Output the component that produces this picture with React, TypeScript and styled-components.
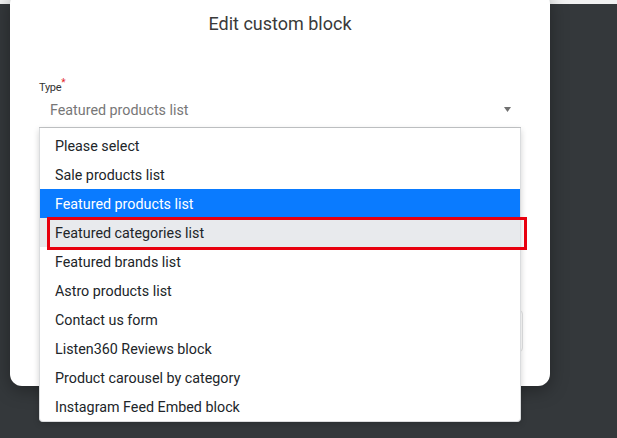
import React from 'react';
import styled, { createGlobalStyle } from 'styled-components';

const GlobalStyle = createGlobalStyle`
  html, body {
    margin: 0;
    padding: 0;
    background: #34383b;
    font-family: Roboto, "Liberation Sans", Arial, sans-serif;
  }
`;

const Page = styled.div`
  width: 617px;
  height: 438px;
  overflow: hidden;
  position: relative;
`;

const TopStrip = styled.div`
  height: 4px;
  background: #f1f2f2;
`;

const Modal = styled.div`
  position: relative;
  box-sizing: border-box;
  width: 540px;
  height: 394px;
  margin: -12px 0 0 10px;
  padding: 20px 29px 0;
  background: #fff;
  border-radius: 12px;
  box-shadow: 0 4px 18px rgba(0, 0, 0, 0.35);
`;

const Title = styled.h2`
  margin: 0;
  font-size: 18px;
  line-height: 24px;
  font-weight: 400;
  color: #3a3a3a;
  text-align: center;
`;

const Field = styled.div`
  position: relative;
  margin-top: 45px;
  z-index: 2;
`;

const Label = styled.label`
  display: block;
  font-size: 11px;
  line-height: 14px;
  color: #333;
  letter-spacing: -0.3px;

  sup {
    color: #e3262b;
    font-size: 10px;
    line-height: 0;
  }
`;

const SelectBox = styled.div`
  box-sizing: border-box;
  height: 33px;
  display: flex;
  align-items: center;
  justify-content: space-between;
  padding: 0 10px 3px 11px;
  border-bottom: 1px solid #c4c6c8;
  font-size: 14.3px;
  color: #777;
`;

const Dropdown = styled.ul`
  position: absolute;
  top: 100%;
  left: 0;
  box-sizing: border-box;
  width: 482px;
  margin: 0;
  padding: 3px 0 0;
  list-style: none;
  background: #fff;
  border: 1px solid #dadcde;
  border-top: none;
  border-radius: 0 0 4px 4px;
  box-shadow: 0 2px 6px rgba(0, 0, 0, 0.18);
`;

const Option = styled.li<{ $state?: 'selected' | 'hover' }>`
  height: 29px;
  display: flex;
  align-items: center;
  padding: 0 15px;
  font-size: 14.3px;
  color: ${(p) => (p.$state === 'selected' ? '#fff' : '#212529')};
  background: ${(p) =>
    p.$state === 'selected' ? '#0a7bff' : p.$state === 'hover' ? '#e8eaed' : 'transparent'};
`;

const Highlight = styled.div`
  position: absolute;
  left: 7px;
  top: 89px;
  width: 480px;
  height: 33px;
  box-sizing: border-box;
  border: 3px solid #e8000e;
  pointer-events: none;
`;

const GhostInput = styled.div`
  margin-top: 182px;
  width: 484px;
  height: 42px;
  box-sizing: border-box;
  border: 1px solid #e2e3e4;
  border-radius: 4px;
`;

const options = [
  'Please select',
  'Sale products list',
  'Featured products list',
  'Featured categories list',
  'Featured brands list',
  'Astro products list',
  'Contact us form',
  'Listen360 Reviews block',
  'Product carousel by category',
  'Instagram Feed Embed block',
];

export default function App() {
  return (
    <Page>
      <GlobalStyle />
      <TopStrip />
      <Modal>
        <Title>Edit custom block</Title>
        <Field>
          <Label>
            Type<sup>*</sup>
          </Label>
          <SelectBox>
            <span>Featured products list</span>
            <svg width="7" height="5" viewBox="0 0 7 5">
              <path d="M0 0h7L3.5 5z" fill="#707070" />
            </svg>
          </SelectBox>
          <Dropdown>
            {options.map((o) => (
              <Option
                key={o}
                $state={
                  o === 'Featured products list'
                    ? 'selected'
                    : o === 'Featured categories list'
                    ? 'hover'
                    : undefined
                }
              >
                {o}
              </Option>
            ))}
            <Highlight />
          </Dropdown>
        </Field>
        <GhostInput />
      </Modal>
    </Page>
  );
}
